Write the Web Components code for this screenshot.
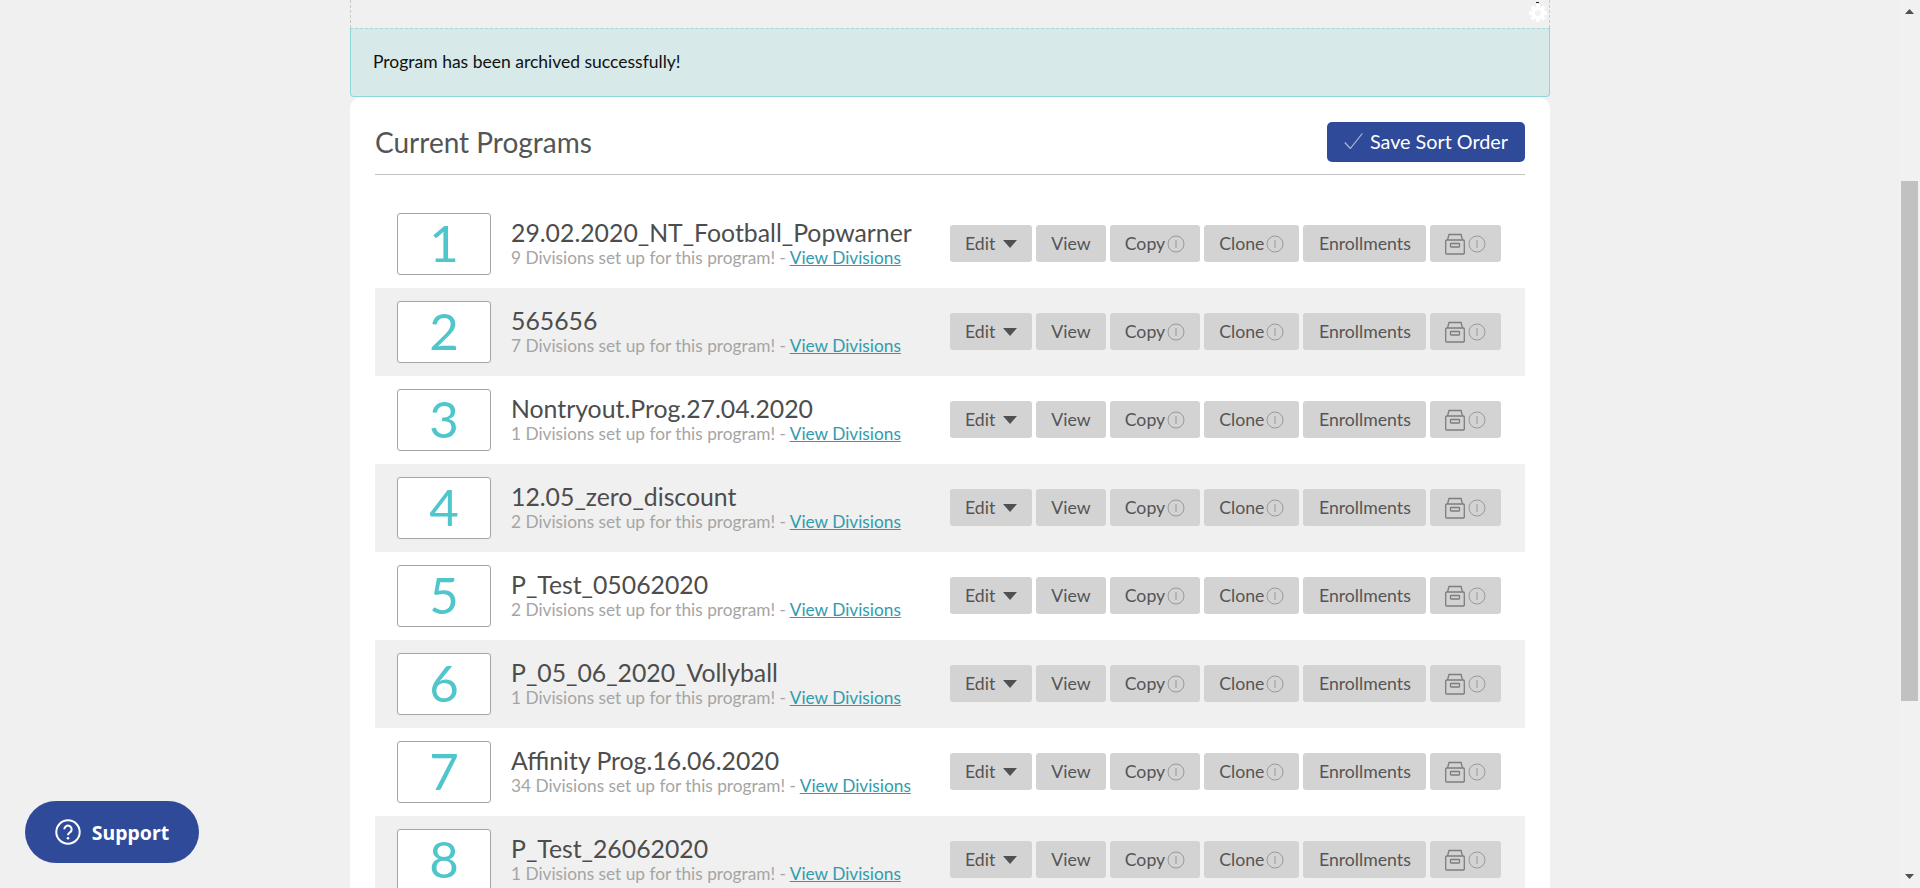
<!DOCTYPE html>
<html lang="en"><head><meta charset="utf-8"><title>Current Programs</title>
<style>
html,body{margin:0;height:888px;overflow:hidden;background:#f0f0f0;font-family:Lato,"Liberation Sans",sans-serif;}
</style></head><body>
<app-page>
  <status-alert>Program has been archived successfully!</status-alert>
  <program-panel heading="Current Programs">
    <program-row num="1" name="29.02.2020_NT_Football_Popwarner" count="9"></program-row>
    <program-row num="2" name="565656" count="7" shaded></program-row>
    <program-row num="3" name="Nontryout.Prog.27.04.2020" count="1"></program-row>
    <program-row num="4" name="12.05_zero_discount" count="2" shaded></program-row>
    <program-row num="5" name="P_Test_05062020" count="2"></program-row>
    <program-row num="6" name="P_05_06_2020_Vollyball" count="1" shaded></program-row>
    <program-row num="7" name="Affinity Prog.16.06.2020" count="34"></program-row>
    <program-row num="8" name="P_Test_26062020" count="1" shaded></program-row>
  </program-panel>
</app-page>
<support-button></support-button>
<script>
const INFO=`<svg class="info" width="18" height="18" viewBox="0 0 18 18" aria-hidden="true"><circle cx="9" cy="9" r="8" fill="none" stroke="#999"/><path d="M9 5v8" stroke="#999" fill="none"/></svg>`;
function def(name,cls){customElements.define(name,cls)}
def('app-page',class extends HTMLElement{constructor(){super();this.attachShadow({mode:'open'}).innerHTML=`
<style>
:host{display:flex;width:1920px;height:888px;overflow:hidden}
.main{flex:1;display:flex;flex-direction:column;align-items:center;min-width:0}
.top{box-sizing:border-box;width:1200px;height:28px;flex:none;border:1px dashed #c9c9c9;border-top:0;border-bottom:0;position:relative}
.gear{position:absolute;right:1px;top:3px}
.tick{position:absolute;right:10px;top:2px;width:3px;height:1px;background:#222}
.col{width:1200px}
.bar{flex:none;width:20px;height:888px;background:#f1f1f1;display:flex;flex-direction:column;align-items:center;box-sizing:border-box;padding-right:1px}
.arrow{height:181px;flex:none;display:flex;align-items:flex-start;padding-top:9px;box-sizing:border-box}
.thumb{flex:none;width:17px;height:520px;background:#c1c1c1}
.rest{flex:1;display:flex;align-items:flex-end;padding-bottom:9px}
</style>
<div class="main">
 <div class="top"><span class="tick"></span>
  <svg class="gear" width="20" height="20" viewBox="0 0 20 20" aria-hidden="true"><g fill="#fff"><circle cx="10" cy="10" r="6.4"/><rect x="8" y="1" width="4" height="18" rx="1"/><rect x="8" y="1" width="4" height="18" rx="1" transform="rotate(45 10 10)"/><rect x="8" y="1" width="4" height="18" rx="1" transform="rotate(90 10 10)"/><rect x="8" y="1" width="4" height="18" rx="1" transform="rotate(135 10 10)"/></g><circle cx="10" cy="10" r="3" fill="#f3f3f3"/></svg>
 </div>
 <div class="col"><slot></slot></div>
</div>
<div class="bar">
 <div class="arrow"><svg width="9" height="5" viewBox="0 0 9 5" aria-hidden="true"><path d="M4.500 0 9 5H0z" fill="#505050"/></svg></div>
 <div class="thumb"></div>
 <div class="rest"><svg width="9" height="5" viewBox="0 0 9 5" aria-hidden="true"><path d="M0 0h9L4.500 5z" fill="#505050"/></svg></div>
</div>`}});
def('status-alert',class extends HTMLElement{constructor(){super();this.attachShadow({mode:'open'}).innerHTML=`
<style>:host{display:flex;align-items:center;box-sizing:border-box;height:69px;padding:0 0 3px 22px;background:#d8e9e9;border:1px solid #8fd6d9;border-top:1px dashed #a6d8da;border-radius:0 0 4px 4px;color:#111;font-size:17.5px}</style><slot></slot>`}});
def('program-panel',class extends HTMLElement{constructor(){super();this.attachShadow({mode:'open'}).innerHTML=`
<style>
:host{display:block;background:#fff;border-radius:12px 12px 0 0;padding:25px 25px 0}
header{display:flex;justify-content:space-between;align-items:flex-start;height:53px;border-bottom:1px solid #c4c4c4;box-sizing:border-box}
h2{margin:0;font-weight:400;font-size:28px;color:#555;line-height:40px}
button{all:unset;box-sizing:border-box;display:flex;align-items:center;gap:7px;height:40px;padding:0 17px 2px 17px;background:#2f4a99;border-radius:5px;color:#fff;font:400 19.8px Lato,sans-serif}
.rows{margin-top:25px;display:block}
</style>
<header><h2></h2><button><svg width="19" height="16" viewBox="0 0 19 16" aria-hidden="true"><path d="M.8 9.500 6.300 15.500 18.300.5" fill="none" stroke="#aeb9d9" stroke-width="1.2"/></svg>Save Sort Order</button></header>
<div class="rows"><slot></slot></div>`;
this.shadowRoot.querySelector('h2').textContent=this.getAttribute('heading')}});
def('action-btn',class extends HTMLElement{constructor(){super();this.attachShadow({mode:'open'}).innerHTML=`
<style>:host{display:flex;align-items:center;box-sizing:border-box;height:37px;padding:0 var(--pr,15px) 0 var(--pl,15px);background:#d3d3d3;border-radius:3px;color:#555;font-size:17.7px;gap:var(--g,2px);white-space:nowrap}</style><slot></slot>`}});
def('program-row',class extends HTMLElement{constructor(){super();const n=this.getAttribute('name'),c=this.getAttribute('count'),u=this.getAttribute('num');
this.attachShadow({mode:'open'}).innerHTML=`
<style>
:host{display:flex;align-items:center;box-sizing:border-box;height:88px;padding-left:22px;background:#fff}
:host([shaded]){background:#f0f0f0}
.num{box-sizing:border-box;flex:none;width:94px;height:62px;background:#fff;border:1px solid #a5a5a5;border-radius:3px;color:#4fc6cb;font-size:51px;line-height:58px;text-align:center}
.txt{flex:none;width:439px;margin:0 0 2px 20px}
.name{font-size:24.8px;line-height:27px;color:#4d4d4d;white-space:nowrap}
.sub{font-size:17.27px;line-height:20px;margin-top:2px;color:#a5a5a5;white-space:nowrap}
a{color:#2f9cae;text-decoration:underline}
.acts{display:flex;gap:4px;margin-bottom:1px}
.caret{width:0;height:0;border:7.5px solid transparent;border-top:8px solid #505050;border-bottom:0;margin-left:6px;margin-top:1px}
</style>
<div class="num">${u}</div>
<div class="txt"><div class="name">${n}</div><div class="sub">${c} Divisions set up for this program! - <a href="#">View Divisions</a></div></div>
<div class="acts">
<action-btn>Edit<span class="caret"></span></action-btn>
<action-btn>View</action-btn>
<action-btn>Copy${INFO}</action-btn>
<action-btn>Clone${INFO}</action-btn>
<action-btn style="--pl:15.5px;--pr:15.5px">Enrollments</action-btn>
<action-btn style="--g:3px"><svg width="20" height="24" viewBox="0 0 20 24" aria-hidden="true"><g fill="none" stroke="#7d7d7d" stroke-width="1.3"><path d="M2.500 8 4 2.500h12L17.500 8"/><rect x=".7" y="8" width="18.600" height="14" rx="1"/><rect x="5.500" y="11.500" width="9" height="3.500" rx=".5"/></g></svg>${INFO}</action-btn>
</div>`}});
def('support-button',class extends HTMLElement{constructor(){super();this.attachShadow({mode:'open'}).innerHTML=`
<style>:host{position:fixed;left:25px;top:801px;width:174px;height:62px;border-radius:31px;background:#2f4a99;color:#fff;display:flex;align-items:center;justify-content:center;gap:11px;font:700 19.5px "Noto Sans","Open Sans",sans-serif;box-sizing:border-box}</style>
<svg width="26" height="26" viewBox="0 0 26 26" aria-hidden="true"><circle cx="13" cy="13" r="11.700" fill="none" stroke="#fff" stroke-width="2"/><path d="M9.300 10.200a3.700 3.700 0 1 1 5.600 3.200c-1.300.8-1.900 1.400-1.900 2.800" fill="none" stroke="#fff" stroke-width="2"/><circle cx="13" cy="19.300" r="1.300" fill="#fff"/></svg>Support`}});
</script>
</body></html>
